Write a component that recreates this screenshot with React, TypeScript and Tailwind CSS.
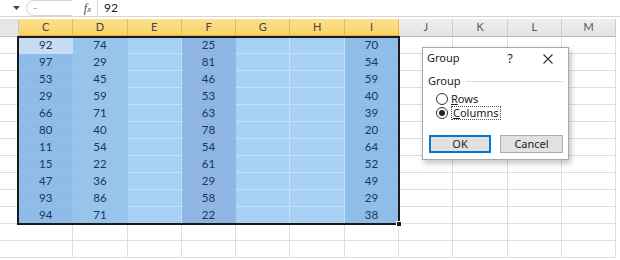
import React from 'react';

const COLS = ['C', 'D', 'E', 'F', 'G', 'H', 'I', 'J', 'K', 'L', 'M'];

const DATA: Record<string, number[]> = {
  C: [92, 97, 53, 29, 66, 80, 11, 15, 47, 93, 94],
  D: [74, 29, 45, 59, 71, 40, 54, 22, 36, 86, 71],
  F: [25, 81, 46, 53, 63, 78, 54, 61, 29, 58, 22],
  I: [70, 54, 59, 40, 39, 20, 64, 52, 49, 29, 38],
};

// fill + gridline colour per selected column
const FILL: Record<string, string> = {
  C: 'bg-[#8fbbe8] border-[#93bfea]',
  D: 'bg-[#98c4ec] border-[#9cc7ed]',
  E: 'bg-[#a7d0f2] border-[#c4e0f7]',
  F: 'bg-[#8fb6e2] border-[#93b9e4]',
  G: 'bg-[#a7d0f2] border-[#c4e0f7]',
  H: 'bg-[#a7d0f2] border-[#c4e0f7]',
  I: 'bg-[#8ebde8] border-[#92c0ea]',
};

const SELECTED = ['C', 'D', 'E', 'F', 'G', 'H', 'I'];

const FormulaBar: React.FC = () => (
  <div className="h-[17px] flex items-center border-b border-[#d5d5d5] bg-white">
    <div className="w-[26px] flex justify-center pl-[6px]">
      <svg width="7" height="4" viewBox="0 0 7 4">
        <path d="M0 0h7L3.5 4z" fill="#444" />
      </svg>
    </div>
    <div className="w-[46px] h-[16px] rounded-l-full border border-r-0 border-[#d8d8d8] flex items-center pl-[6px]">
      <div className="w-[4px] h-px bg-[#c0c0c0]" />
    </div>
    <div className="w-[25px] h-full flex items-center justify-center pl-[6px]">
      <span className="font-['Liberation_Serif',serif] italic text-[12px] text-[#444] leading-none">
        f<span className="text-[9px]">x</span>
      </span>
    </div>
    <div className="w-px h-full bg-[#d5d5d5]" />
    <span className="pl-[6px] text-[12px] text-[#222] font-['Lato',sans-serif]">92</span>
  </div>
);

const HeaderRow: React.FC = () => (
  <div className="flex h-[18px]">
    <div className="w-[19px] shrink-0 bg-[#e6e6e6] border-r border-b border-[#c6c6c6]" />
    {COLS.map((c) => {
      const sel = SELECTED.includes(c);
      return (
        <div
          key={c}
          className={
            sel
              ? 'w-[54.3px] shrink-0 flex items-center justify-center text-[11px] text-[#444] bg-gradient-to-b from-[#fbe08c] to-[#f8d468] border-r border-r-[#e0bb52] border-b-2 border-b-[#e8b13c]'
              : 'w-[54.3px] shrink-0 flex items-center justify-center text-[11px] text-[#555] bg-gradient-to-b from-[#efefef] to-[#e3e3e3] border-r border-r-[#cdcdcd] border-b border-b-[#bdbdbd]'
          }
        >
          {c}
        </div>
      );
    })}
  </div>
);

const Row: React.FC<{ i: number }> = ({ i }) => (
  <div className="flex h-[17px]">
    <div className="w-[19px] shrink-0 bg-white border-b border-[#dedede]" />
    {COLS.map((c) => {
      const inSel = i < 11 && SELECTED.includes(c);
      const active = inSel && i === 0 && c === 'C';
      const val = inSel && DATA[c] ? DATA[c][i] : '';
      const cls = active
        ? 'bg-[#c6dcf2] border-[#c6dcf2]'
        : inSel
          ? FILL[c]
          : 'bg-white border-[#dedede]';
      return (
        <div
          key={c}
          className={`w-[54.3px] shrink-0 border-r border-b flex items-center justify-center text-[11.5px] text-[#1d3557] ${cls}`}
        >
          {val}
        </div>
      );
    })}
  </div>
);

const Radio: React.FC<{ checked?: boolean }> = ({ checked }) => (
  <span className="w-[12px] h-[12px] rounded-full border border-[#333] bg-white flex items-center justify-center shrink-0">
    {checked && <span className="w-[6px] h-[6px] rounded-full bg-[#222]" />}
  </span>
);

const GroupDialog: React.FC = () => (
  <div className="absolute left-[422px] top-[47px] w-[147px] h-[113px] bg-white border border-[#a8a8a8] shadow-[2px_3px_6px_rgba(0,0,0,0.25)] font-['Noto_Sans',sans-serif] text-[#222]">
    <div className="h-[21px] flex items-center pl-[4px] text-[11px]">
      <span className="flex-1">Group</span>
      <span className="w-[36px] text-center text-[12px]">?</span>
      <span className="w-[40px] flex justify-center">
        <svg width="10" height="10" viewBox="0 0 10 10">
          <path d="M0.5 0.5l9 9M9.5 0.5l-9 9" stroke="#333" strokeWidth="1.1" />
        </svg>
      </span>
    </div>
    <div className="px-[5px] pt-[5px]">
      <div className="flex items-center gap-[5px] text-[11px] h-[15px]">
        <span>Group</span>
        <div className="flex-1 h-px bg-[#dcdcdc]" />
      </div>
      <div className="pl-[8px] pt-[3px] flex flex-col text-[11px]">
        <label className="flex items-center gap-[3px] h-[14px]">
          <Radio />
          <span><u>R</u>ows</span>
        </label>
        <label className="flex items-center gap-[3px] h-[14px]">
          <Radio checked />
          <span className="border border-dotted border-[#555] px-px leading-[12px]"><u>C</u>olumns</span>
        </label>
      </div>
      <div className="flex gap-[9px] pt-[15px] pl-[1px] text-[11px]">
        <button className="w-[62px] h-[18px] bg-[#e1e1e1] border-2 border-[#0078d7] flex items-center justify-center">OK</button>
        <button className="w-[63px] h-[18px] bg-[#e1e1e1] border border-[#adadad] flex items-center justify-center">Cancel</button>
      </div>
    </div>
  </div>
);

export default function App() {
  return (
    <div className="w-[620px] h-[260px] overflow-hidden relative bg-white font-['Lato',sans-serif]">
      <FormulaBar />
      <div className="h-[2px]" />
      <div className="relative">
        <HeaderRow />
        {Array.from({ length: 13 }, (_, i) => (
          <Row key={i} i={i} />
        ))}
        {/* selection outline */}
        <div className="absolute left-[17px] top-[17px] w-[383px] h-[189px] border-2 border-[#1a1a1a] pointer-events-none" />
        <div className="absolute left-[396px] top-[202px] w-[6px] h-[6px] bg-[#1a1a1a] border border-white" />
      </div>
      <GroupDialog />
    </div>
  );
}
